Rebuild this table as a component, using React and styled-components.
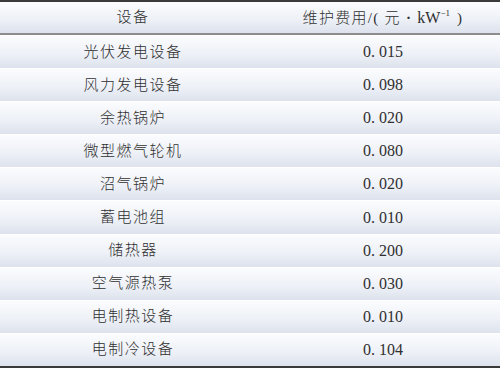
import React from 'react';
import styled, {createGlobalStyle} from 'styled-components';

const rows = [
  ['光伏发电设备', '0. 015'],
  ['风力发电设备', '0. 098'],
  ['余热锅炉', '0. 020'],
  ['微型燃气轮机', '0. 080'],
  ['沼气锅炉', '0. 020'],
  ['蓄电池组', '0. 010'],
  ['储热器', '0. 200'],
  ['空气源热泵', '0. 030'],
  ['电制热设备', '0. 010'],
  ['电制冷设备', '0. 104'],
];

const GlobalStyle = createGlobalStyle`
  html, body {
    margin: 0;
    padding: 0;
    background: #ffffff;
  }
`;

const App = () => {
  return (
    <>
      <GlobalStyle />
      <StyledTable>
        <StyledHead>
          <StyledCell>设备</StyledCell>
          <StyledCell $head>
            维护费用/( 元 <b>·</b> <i>kW<sup>−1</sup></i> )
          </StyledCell>
        </StyledHead>
        {rows.map(([name, cost]) => (
          <StyledRow key={name}>
            <StyledCell>{name}</StyledCell>
            <StyledCell $num>{cost}</StyledCell>
          </StyledRow>
        ))}
      </StyledTable>
    </>
  );
};

const StyledTable = styled.div`
  width: 500px;
  height: 368px;
  box-sizing: border-box;
  border-top: 2px solid #3a3a3a;
  border-bottom: 2px solid #3a3a3a;
  display: flex;
  flex-direction: column;
  font-family: 'Liberation Serif', 'Noto Sans CJK SC', serif;
  color: #303030;
`;

const StyledRow = styled.div`
  height: 33.1px;
  display: grid;
  grid-template-columns: 266px 1fr;
  align-items: center;
  background: linear-gradient(to bottom, #fbfcfe 0%, #eef1f7 55%, #dde2ed 100%);
  border-top: 1px solid #ffffff;
  box-sizing: border-box;
`;

const StyledHead = styled(StyledRow)`
  height: 33px;
  border-top: none;
  border-bottom: 2px solid #8c8c8c;
`;

const StyledCell = styled.div`
  text-align: center;
  font-size: ${(p) => (p.$num ? '16px' : '15px')};
  font-weight: 300;
  letter-spacing: ${(p) => (p.$num ? '0' : p.$head ? '1.3px' : '1.5px')};
  line-height: 1;
  b {
    font-weight: 700;
  }
  i {
    font-style: normal;
    font-size: 16px;
    letter-spacing: 0;
    margin-right: 2px;
  }
  sup {
    font-size: 9px;
    vertical-align: 7px;
    letter-spacing: 0;
  }
`;

export default App;
